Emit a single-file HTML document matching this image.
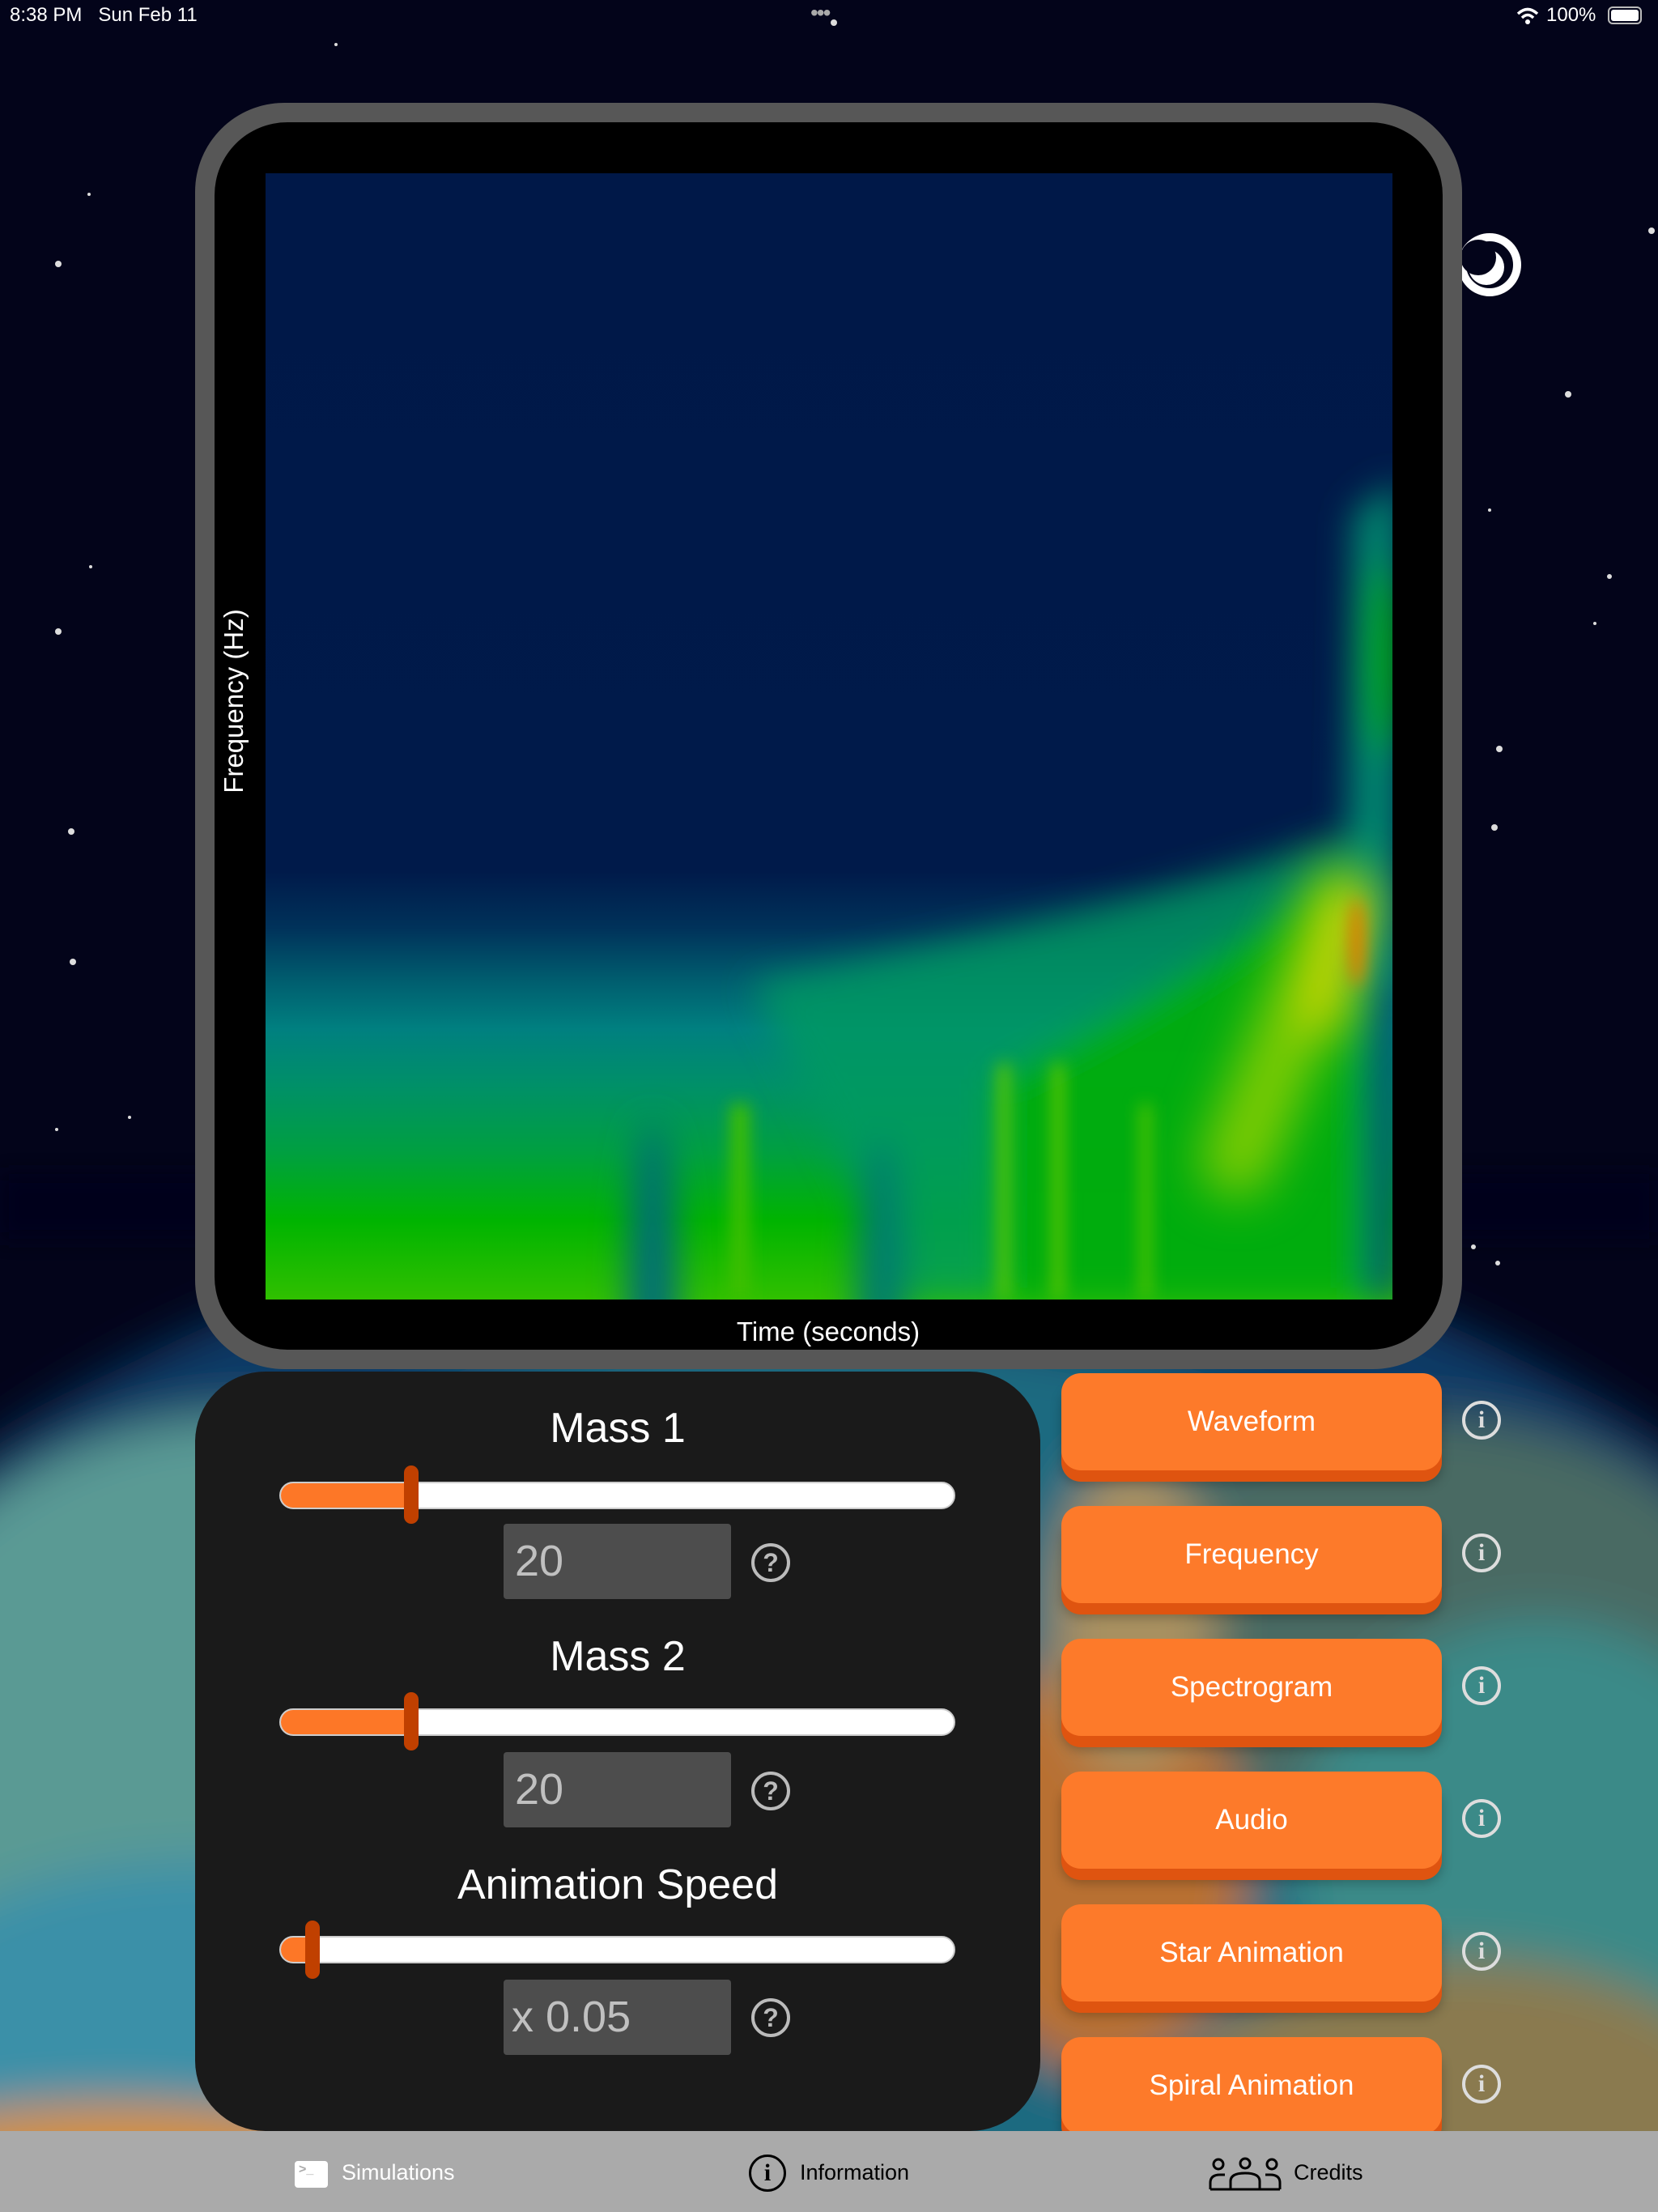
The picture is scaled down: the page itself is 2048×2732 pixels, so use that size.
<!DOCTYPE html>
<html><head><meta charset="utf-8">
<style>
*{margin:0;padding:0;box-sizing:border-box}
html,body{width:2048px;height:2732px;overflow:hidden;background:#03041a;font-family:"Liberation Sans",sans-serif}
#wrap{position:fixed;left:0;top:0;width:2048px;height:2732px;overflow:hidden}
.abs{position:absolute}
.t{color:#fff;white-space:nowrap}
.slider{position:absolute;left:345px;width:835px;height:34px;border-radius:17px;background:#fff;border:2px solid #ccc;overflow:hidden}
.slider .fill{position:absolute;left:0;top:0;height:100%;background:#fd7727}
.thumb{position:absolute;width:18px;height:72px;border-radius:9px;background:#c04000}
.box{position:absolute;left:622px;width:281px;height:93px;background:#4d4d4d;border-radius:4px;color:#c0c0c0;font-size:54px;line-height:93px;padding-left:14px}
.q{position:absolute;left:928px;width:48px;height:48px;border:4px solid #bbb;border-radius:50%;color:#bbb;font-size:32px;font-weight:bold;text-align:center;line-height:40px}
.title{position:absolute;left:241px;width:1044px;text-align:center;color:#fff;font-size:52px}
.btn{position:absolute;left:1311px;width:470px;height:120px;background:#fd7a2a;border-radius:24px;box-shadow:0 14px 0 #df5410, 0 18px 14px rgba(0,0,0,.25);color:#fff;font-size:35px;text-align:center;line-height:120px}
.info{position:absolute;left:1806px;width:48px;height:48px;border:4px solid #ddd;border-radius:50%;color:#ddd;font-size:30px;font-weight:bold;text-align:center;line-height:40px;font-family:"Liberation Serif",serif}
</style></head><body><div id="wrap">
<svg width="2048" height="2732" style="position:absolute;left:0;top:0">
<defs>
<filter id="b1" filterUnits="userSpaceOnUse" x="-500" y="-500" width="3048" height="3732"><feGaussianBlur stdDeviation="30"/></filter>
<filter id="b2" filterUnits="userSpaceOnUse" x="-500" y="-500" width="3048" height="3732"><feGaussianBlur stdDeviation="12"/></filter>
</defs>
<rect width="2048" height="2732" fill="#03041a"/>
<g filter="url(#b1)">
<ellipse cx="1024" cy="2600" rx="1500" ry="1120" fill="#0a3a66"/>
<ellipse cx="1024" cy="2650" rx="1300" ry="1000" fill="#1a6a80"/>
<ellipse cx="300" cy="2200" rx="500" ry="450" fill="#5a9a94"/>
<ellipse cx="250" cy="2500" rx="400" ry="200" fill="#3a90a8"/>
<ellipse cx="150" cy="2690" rx="350" ry="90" fill="#d89030"/>
<ellipse cx="1750" cy="2000" rx="400" ry="250" fill="#4a6a64"/>
<ellipse cx="1900" cy="2300" rx="300" ry="300" fill="#3a8a88"/>
<ellipse cx="1800" cy="2600" rx="350" ry="180" fill="#8a7a50"/>
<ellipse cx="1360" cy="2300" rx="180" ry="260" fill="#b87030"/>
<ellipse cx="1400" cy="2000" rx="100" ry="200" fill="#a89060"/>
</g>
<rect x="0" y="1450" width="2048" height="80" fill="#03041a" filter="url(#b2)" opacity=".8"/>
<g fill="#ddd">
<circle cx="72" cy="326" r="4"/><circle cx="72" cy="780" r="4"/><circle cx="88" cy="1027" r="4"/><circle cx="90" cy="1188" r="4"/><circle cx="110" cy="240" r="2"/><circle cx="112" cy="700" r="2"/><circle cx="1937" cy="487" r="4"/><circle cx="1852" cy="925" r="4"/><circle cx="1846" cy="1022" r="4"/><circle cx="2040" cy="285" r="4"/><circle cx="1988" cy="712" r="3"/><circle cx="1970" cy="770" r="2"/><circle cx="1840" cy="630" r="2"/><circle cx="1030" cy="28" r="4"/><circle cx="415" cy="55" r="2"/><circle cx="1820" cy="1540" r="3"/><circle cx="1850" cy="1560" r="3"/><circle cx="70" cy="1395" r="2"/><circle cx="160" cy="1380" r="2"/>
</g>
<circle cx="1840" cy="327" r="34" fill="none" stroke="#fff" stroke-width="10"/>
<circle cx="1836" cy="330" r="22" fill="#fff"/>
<circle cx="1826" cy="318" r="22" fill="#03041a"/>
</svg>

<div class="abs t" style="left:12px;top:5px;font-size:24px">8:38 PM&nbsp;&nbsp;&nbsp;Sun Feb 11</div>
<div class="abs t" style="left:1001px;top:0px;font-size:28px;color:#aaa;letter-spacing:-2px">•••</div>
<div class="abs t" style="left:1910px;top:5px;font-size:24px">100%</div>
<svg class="abs" style="left:1872px;top:8px" width="30" height="24"><path d="M3 9 Q15 -2 27 9" stroke="#fff" stroke-width="3.5" fill="none"/><path d="M8 14 Q15 7 22 14" stroke="#fff" stroke-width="3.5" fill="none"/><circle cx="15" cy="19" r="3" fill="#fff"/></svg>
<div class="abs" style="left:1986px;top:8px;width:42px;height:22px;border:2px solid #bbb;border-radius:6px;padding:2px"><div style="width:100%;height:100%;background:#fff;border-radius:3px"></div></div>

<div class="abs" style="left:241px;top:127px;width:1565px;height:1564px;background:#575757;border-radius:110px"></div>
<div class="abs" style="left:265px;top:151px;width:1517px;height:1516px;background:#000;border-radius:90px"></div>
<svg class="abs" style="left:328px;top:214px" width="1392" height="1391">
<defs>
<linearGradient id="v" x1="0" y1="0" x2="0" y2="1">
<stop offset="0" stop-color="#001848"/><stop offset="0.62" stop-color="#001a4a"/><stop offset="0.67" stop-color="#00325a"/><stop offset="0.72" stop-color="#006070"/><stop offset="0.76" stop-color="#008080"/><stop offset="0.81" stop-color="#009068"/><stop offset="0.87" stop-color="#00a040"/><stop offset="0.93" stop-color="#00b400"/><stop offset="1" stop-color="#30c000"/>
</linearGradient>
<filter id="s1" filterUnits="userSpaceOnUse" x="-300" y="-300" width="2000" height="2000"><feGaussianBlur stdDeviation="22"/></filter>
<filter id="s3" filterUnits="userSpaceOnUse" x="-300" y="-300" width="2000" height="2000"><feGaussianBlur stdDeviation="30"/></filter>
<filter id="s2" filterUnits="userSpaceOnUse" x="-300" y="-300" width="2000" height="2000"><feGaussianBlur stdDeviation="10"/></filter>
<clipPath id="cp"><rect width="1392" height="1391"/></clipPath>
</defs>
<g clip-path="url(#cp)">
<rect width="1392" height="1391" fill="url(#v)"/>
<g filter="url(#s1)">
<path d="M600 1000 Q1100 900 1290 830 L1392 800 L1392 1391 L800 1391Z" fill="#009a60" opacity=".8"/>
<path d="M900 1120 Q1150 1000 1320 860 L1392 900 L1392 1391 L900 1391Z" fill="#00b000" opacity=".85"/>
<path d="M1345 420 L1400 380 L1400 1000 L1335 1000Z" fill="#008a70"/>
<ellipse cx="1380" cy="600" rx="22" ry="120" fill="#00b000"/>
<rect x="1360" y="1000" width="40" height="391" fill="#005070"/>
<ellipse cx="478" cy="1391" rx="30" ry="220" fill="#006a7a"/>
<ellipse cx="760" cy="1391" rx="30" ry="200" fill="#007a70"/>
</g>
<g filter="url(#s3)">
<line x1="1330" y1="900" x2="1200" y2="1220" stroke="#90d000" stroke-width="90" stroke-linecap="round" opacity=".85"/>
<line x1="1340" y1="900" x2="1310" y2="1040" stroke="#d8d800" stroke-width="50" stroke-linecap="round"/>
</g>
<g filter="url(#s2)">
<ellipse cx="1348" cy="950" rx="10" ry="55" fill="#e08000"/>
<rect x="575" y="1150" width="22" height="241" fill="#40c000"/>
<rect x="905" y="1100" width="14" height="291" fill="#60c800"/>
<rect x="972" y="1100" width="14" height="291" fill="#60c800"/>
<rect x="1080" y="1150" width="14" height="241" fill="#50c400"/>
</g>
</g>
</svg>
<div class="abs t" style="left:289px;top:866px;font-size:33px;transform:translate(-50%,-50%) rotate(-90deg)">Frequency (Hz)</div>
<div class="abs t" style="left:1023px;top:1626px;font-size:33px;transform:translateX(-50%)">Time (seconds)</div>

<div class="abs" style="left:241px;top:1694px;width:1044px;height:938px;background:#1a1a1a;border-radius:87px"></div>
<div class="title" style="top:1734px">Mass 1</div>
<div class="slider" style="top:1830px"><div class="fill" style="width:162px"></div></div>
<div class="thumb" style="left:499px;top:1810px"></div>
<div class="box" style="top:1882px">20</div>
<div class="q" style="top:1906px">?</div>

<div class="title" style="top:2016px">Mass 2</div>
<div class="slider" style="top:2110px"><div class="fill" style="width:162px"></div></div>
<div class="thumb" style="left:499px;top:2090px"></div>
<div class="box" style="top:2164px">20</div>
<div class="q" style="top:2188px">?</div>

<div class="title" style="top:2298px">Animation Speed</div>
<div class="slider" style="top:2391px"><div class="fill" style="width:36px"></div></div>
<div class="thumb" style="left:377px;top:2372px"></div>
<div class="box" style="top:2445px;padding-left:10px">x 0.05</div>
<div class="q" style="top:2468px">?</div>

<div class="btn" style="top:1696px">Waveform</div>
<div class="btn" style="top:1860px">Frequency</div>
<div class="btn" style="top:2024px">Spectrogram</div>
<div class="btn" style="top:2188px">Audio</div>
<div class="btn" style="top:2352px">Star Animation</div>
<div class="btn" style="top:2516px">Spiral Animation</div>
<div class="info" style="top:1730px">i</div>
<div class="info" style="top:1894px">i</div>
<div class="info" style="top:2058px">i</div>
<div class="info" style="top:2222px">i</div>
<div class="info" style="top:2386px">i</div>
<div class="info" style="top:2550px">i</div>

<div class="abs" style="left:0;top:2632px;width:2048px;height:100px;background:#aaaaaa"></div>
<div class="abs" style="left:364px;top:2669px;width:41px;height:33px;background:#fff;border-radius:4px;color:#aaa;font-size:16px;padding:2px 5px;font-weight:bold">&gt;_</div>
<div class="abs t" style="left:422px;top:2668px;font-size:27px">Simulations</div>
<div class="abs" style="left:925px;top:2661px;width:46px;height:46px;border:3px solid #000;border-radius:50%;text-align:center;font-size:30px;line-height:40px;font-family:'Liberation Serif',serif;font-weight:bold">i</div>
<div class="abs t" style="left:988px;top:2668px;font-size:27px;color:#000">Information</div>
<svg class="abs" style="left:1493px;top:2664px" width="90" height="42" fill="none" stroke="#000" stroke-width="3">
<circle cx="12" cy="9" r="6"/><circle cx="45" cy="8" r="6"/><circle cx="78" cy="9" r="6"/>
<path d="M2 40 V32 Q2 22 14 22 H20"/><path d="M88 40 V32 Q88 22 76 22 H70"/><path d="M27 40 V30 Q27 20 45 20 Q63 20 63 30 V40Z"/><path d="M2 40 H88"/>
</svg>
<div class="abs t" style="left:1598px;top:2668px;font-size:27px;color:#000">Credits</div>
</div></body></html>
